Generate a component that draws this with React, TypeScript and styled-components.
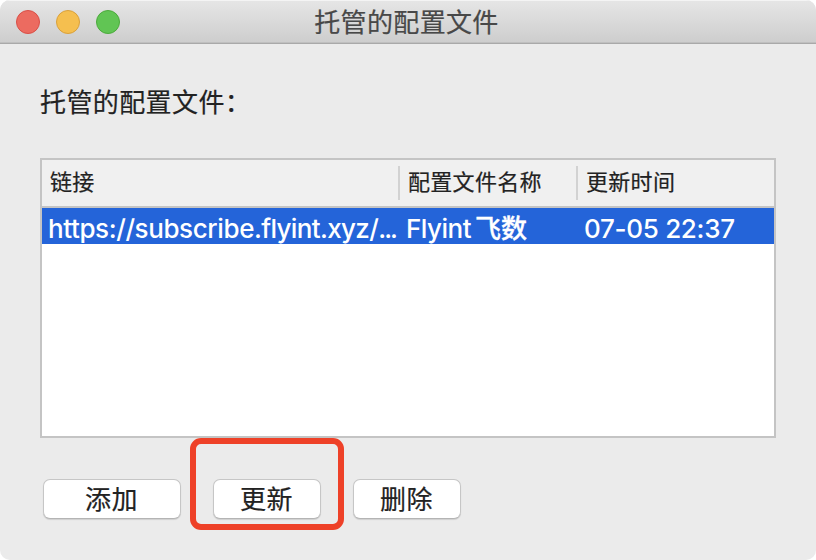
import React from "react";
import styled, { createGlobalStyle } from "styled-components";

const GlobalStyle = createGlobalStyle`
  * { box-sizing: border-box; }
  body { margin: 0; background: #fff; }
`;

const Window = styled.main`
  width: 816px;
  height: 560px;
  display: flex;
  flex-direction: column;
  overflow: hidden;
  background: #ebebeb;
  border-radius: 10px;
  color: #222;
  font-family: Inter, "Noto Sans CJK SC", sans-serif;
  font-size: 26px;
  -webkit-text-stroke-width: 0.2px;
`;

const TitleBar = styled.header`
  height: 44px;
  flex: none;
  display: grid;
  grid-template-columns: 140px 1fr 159px;
  align-items: center;
  padding-left: 16px;
  background: linear-gradient(#e6e6e6, #cdcdcd);
  border-bottom: 1px solid #a9a9a9;
  box-shadow: inset 0 1px #f4f4f4, inset 0 -1px #bfbfbf;
`;

const Lights = styled.div`
  display: flex;
  gap: 16px;
`;

const Light = styled.span<{ $fill: string; $edge: string }>`
  width: 24px;
  height: 24px;
  border-radius: 50%;
  background: ${(p) => p.$fill};
  border: 1px solid ${(p) => p.$edge};
`;

const Title = styled.h1`
  margin: 0;
  padding-top: 2px;
  font-size: 26px;
  line-height: 38px;
  font-weight: 400;
  letter-spacing: 0.35px;
  text-align: center;
  color: #484848;
`;

const Content = styled.section`
  display: flex;
  flex-direction: column;
  padding: 39px 40px 0;
`;

const Label = styled.h2`
  margin: 0 0 35px;
  height: 40px;
  line-height: 40px;
  font-size: 26px;
  font-weight: 400;
  letter-spacing: 0.4px;
`;

const Table = styled.div`
  height: 280px;
  border: 2px solid #c4c4c4;
  background: #fff;
`;

const columns = "356px 178px 1fr";

const HeaderRow = styled.div`
  height: 48px;
  display: grid;
  grid-template-columns: ${columns};
  align-items: center;
  background: #f0f0f0;
  border-bottom: 2px solid #c4c4c4;
`;

const HeaderCell = styled.div<{ $divided?: boolean }>`
  height: 34px;
  line-height: 32px;
  padding-left: 8px;
  font-size: 22px;
  letter-spacing: 0.3px;
  border-left: ${(p) => (p.$divided ? "2px solid #d2d2d2" : "0")};
`;

const DataRow = styled.div`
  height: 36px;
  display: grid;
  grid-template-columns: ${columns};
  background: #2464d9;
  color: #fff;
  font-weight: 500;
  -webkit-text-stroke-width: 0;
`;

const Cell = styled.div<{ $inset: number; $tracking: number }>`
  height: 36px;
  line-height: 42px;
  padding-left: ${(p) => p.$inset}px;
  letter-spacing: ${(p) => p.$tracking}px;
  white-space: nowrap;
`;

const Domain = styled.span`
  letter-spacing: -0.65px;
`;

const Ellipsis = styled.span`
  letter-spacing: -1.9px;
`;

const Cjk = styled.span`
  margin-left: 4px;
  letter-spacing: 0;
  -webkit-text-stroke-width: 0.35px;
`;

const Actions = styled.div`
  display: flex;
  gap: 32px;
  padding: 41px 3px 0;
`;

const Button = styled.button<{ $width: number }>`
  width: ${(p) => p.$width}px;
  height: 40px;
  padding: 1px 1px 0 0;
  border: 1px solid #c6c6c6;
  border-bottom-color: #b4b4b4;
  border-radius: 7px;
  background: #fff;
  box-shadow: 0 1px 1px rgba(0, 0, 0, 0.12);
  color: #222;
  font: inherit;
  line-height: 38px;
  letter-spacing: 0.4px;
`;

const Highlighted = styled.div`
  position: relative;
  display: flex;
`;

const Marker = styled.div`
  position: absolute;
  left: -23px;
  top: -41px;
  width: 154px;
  height: 92px;
  border: 6px solid #ee4128;
  border-radius: 11px;
  pointer-events: none;
`;

export default function App() {
  return (
    <>
      <GlobalStyle />
      <Window>
        <TitleBar>
          <Lights>
            <Light $fill="#ec6b60" $edge="#d94f47" />
            <Light $fill="#f5bf4f" $edge="#d9a03b" />
            <Light $fill="#61c554" $edge="#4caa3c" />
          </Lights>
          <Title>托管的配置文件</Title>
        </TitleBar>
        <Content>
          <Label>托管的配置文件：</Label>
          <Table>
            <HeaderRow>
              <HeaderCell>链接</HeaderCell>
              <HeaderCell $divided>配置文件名称</HeaderCell>
              <HeaderCell $divided>更新时间</HeaderCell>
            </HeaderRow>
            <DataRow>
              <Cell $inset={6} $tracking={-0.4}>
                https://subscribe<Domain>.flyint.xyz/</Domain>
                <Ellipsis>...</Ellipsis>
              </Cell>
              <Cell $inset={8} $tracking={-0.5}>
                Flyint<Cjk>飞数</Cjk>
              </Cell>
              <Cell $inset={8} $tracking={-0.3}>07-05 22:37</Cell>
            </DataRow>
          </Table>
          <Actions>
            <Button $width={138}>添加</Button>
            <Highlighted>
              <Button $width={108}>更新</Button>
              <Marker />
            </Highlighted>
            <Button $width={108}>删除</Button>
          </Actions>
        </Content>
      </Window>
    </>
  );
}
